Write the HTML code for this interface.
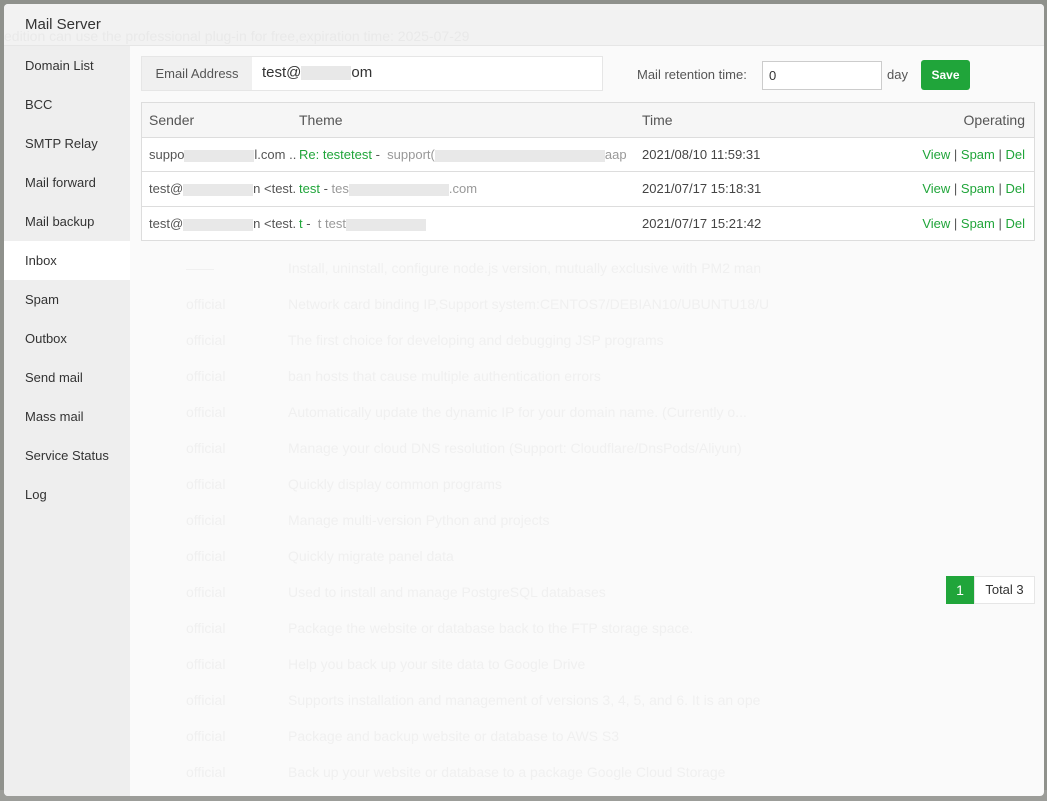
<!DOCTYPE html>
<html><head><meta charset="utf-8"><style>
*{box-sizing:border-box;margin:0;padding:0}
body{width:1047px;height:801px;overflow:hidden;background:#8f918c;font-family:"Liberation Sans",sans-serif;font-size:13px;color:#555;position:relative}
.modal{position:absolute;left:4px;top:4px;width:1040px;height:792px;background:#fafafa;border-radius:4px;overflow:hidden}
.hd{position:absolute;left:0;top:0;width:100%;height:42px;background:#f2f2f2;border-bottom:1px solid #e6e6e6}
.hd span{position:absolute;left:21px;top:12px;font-size:15px;color:#333}
.ghost{position:absolute;color:#f0f0f0;font-size:14px;white-space:nowrap}
.side{position:absolute;left:0;top:42px;width:126px;height:750px;background:#eeeeee}
.side div{height:39px;line-height:39px;padding-left:21px;color:#333;font-size:13px}
.side div.on{background:#fff}
.blk{display:inline-block;background:#e2e2e2;vertical-align:middle;opacity:.8}
.a{color:#20a53a}
</style></head><body>
<div style="position:absolute;left:0;top:790px;width:1047px;height:11px;background:#9c9d99"></div>
<div class="modal">
 <div class="hd"><span>Mail Server</span></div>
 <div class="ghost" style="left:0;top:24px;color:#e9e9e9">edition can use the professional plug-in for free,expiration time: 2025-07-29</div>
 <div class="side">
  <div>Domain List</div><div>BCC</div><div>SMTP Relay</div><div>Mail forward</div><div>Mail backup</div>
  <div class="on">Inbox</div><div>Spam</div><div>Outbox</div><div>Send mail</div><div>Mass mail</div><div>Service Status</div><div>Log</div>
 </div>
 <div class="ghost" style="left:182px;top:246px;line-height:36px">
  <div>——</div><div>official</div><div>official</div><div>official</div><div>official</div><div>official</div><div>official</div><div>official</div><div>official</div><div>official</div><div>official</div><div>official</div><div>official</div><div>official</div><div>official</div>
 </div>
 <div class="ghost" style="left:284px;top:246px;line-height:36px">
  <div>Install, uninstall, configure node.js version, mutually exclusive with PM2 man</div>
  <div>Network card binding IP,Support system:CENTOS7/DEBIAN10/UBUNTU18/U</div>
  <div>The first choice for developing and debugging JSP programs</div>
  <div>ban hosts that cause multiple authentication errors</div>
  <div>Automatically update the dynamic IP for your domain name. (Currently o...</div>
  <div>Manage your cloud DNS resolution (Support: Cloudflare/DnsPods/Aliyun)</div>
  <div>Quickly display common programs</div>
  <div>Manage multi-version Python and projects</div>
  <div>Quickly migrate panel data</div>
  <div>Used to install and manage PostgreSQL databases</div>
  <div>Package the website or database back to the FTP storage space.</div>
  <div>Help you back up your site data to Google Drive</div>
  <div>Supports installation and management of versions 3, 4, 5, and 6. It is an ope</div>
  <div>Package and backup website or database to AWS S3</div>
  <div>Back up your website or database to a package Google Cloud Storage</div>
 </div>
 <div style="position:absolute;left:137px;top:52px;width:462px;height:35px;border:1px solid #e6e6e6;background:#fff">
  <div style="position:absolute;left:0;top:0;width:110px;height:33px;background:#f0f0f0;line-height:33px;text-align:center;color:#555">Email Address</div>
  <div style="position:absolute;left:120px;top:0;line-height:31px;font-size:15px;color:#333">test@<span class="blk" style="width:50px;height:14px"></span>om</div>
 </div>
 <div style="position:absolute;left:633px;top:63px;color:#555">Mail retention time:</div>
 <div style="position:absolute;left:758px;top:57px;width:120px;height:29px;border:1px solid #ccc;background:#fff;line-height:27px;padding-left:6px;color:#333">0</div>
 <div style="position:absolute;left:883px;top:63px;color:#555">day</div>
 <div style="position:absolute;left:917px;top:56px;width:49px;height:30px;background:#20a53a;border-radius:3px;color:#fff;line-height:30px;text-align:center;font-size:12px;font-weight:bold">Save</div>
 <div style="position:absolute;left:137px;top:98px;width:894px;height:139px;border:1px solid #ddd;background:#fff">
  <div style="height:35px;background:#f6f6f6;border-bottom:1px solid #ddd;position:relative;color:#555;font-size:14px">
   <span style="position:absolute;left:7px;top:9px">Sender</span>
   <span style="position:absolute;left:157px;top:9px">Theme</span>
   <span style="position:absolute;left:500px;top:9px">Time</span>
   <span style="position:absolute;right:9px;top:9px">Operating</span>
  </div>
  <div style="height:34px;border-bottom:1px solid #ddd;position:relative;line-height:33px">
   <span style="position:absolute;left:7px">suppo<span class="blk" style="width:70px;height:12px"></span>l.com ..</span>
   <span style="position:absolute;left:157px"><span class="a">Re: testetest</span> - &nbsp;<span style="color:#999">support(<span class="blk" style="width:170px;height:12px"></span>aap</span></span>
   <span style="position:absolute;left:500px;color:#444">2021/08/10 11:59:31</span>
   <span style="position:absolute;right:9px"><span class="a">View</span> | <span class="a">Spam</span> | <span class="a">Del</span></span>
  </div>
  <div style="height:35px;border-bottom:1px solid #ddd;position:relative;line-height:34px">
   <span style="position:absolute;left:7px">test@<span class="blk" style="width:70px;height:12px"></span>n &lt;test.</span>
   <span style="position:absolute;left:157px"><span class="a">test</span> - <span style="color:#999">tes<span class="blk" style="width:100px;height:12px"></span>.com</span></span>
   <span style="position:absolute;left:500px;color:#444">2021/07/17 15:18:31</span>
   <span style="position:absolute;right:9px"><span class="a">View</span> | <span class="a">Spam</span> | <span class="a">Del</span></span>
  </div>
  <div style="height:34px;position:relative;line-height:33px">
   <span style="position:absolute;left:7px">test@<span class="blk" style="width:70px;height:12px"></span>n &lt;test.</span>
   <span style="position:absolute;left:157px"><span class="a">t</span> - &nbsp;<span style="color:#999">t test<span class="blk" style="width:80px;height:12px"></span></span></span>
   <span style="position:absolute;left:500px;color:#444">2021/07/17 15:21:42</span>
   <span style="position:absolute;right:9px"><span class="a">View</span> | <span class="a">Spam</span> | <span class="a">Del</span></span>
  </div>
 </div>
 <div style="position:absolute;left:942px;top:572px;width:28px;height:28px;background:#20a53a;color:#fff;line-height:28px;text-align:center;font-size:14px">1</div>
 <div style="position:absolute;left:970px;top:572px;width:61px;height:28px;border:1px solid #e6e6e6;background:#fff;line-height:26px;text-align:center;color:#333;font-size:13px">Total 3</div>
</div>
</body></html>
